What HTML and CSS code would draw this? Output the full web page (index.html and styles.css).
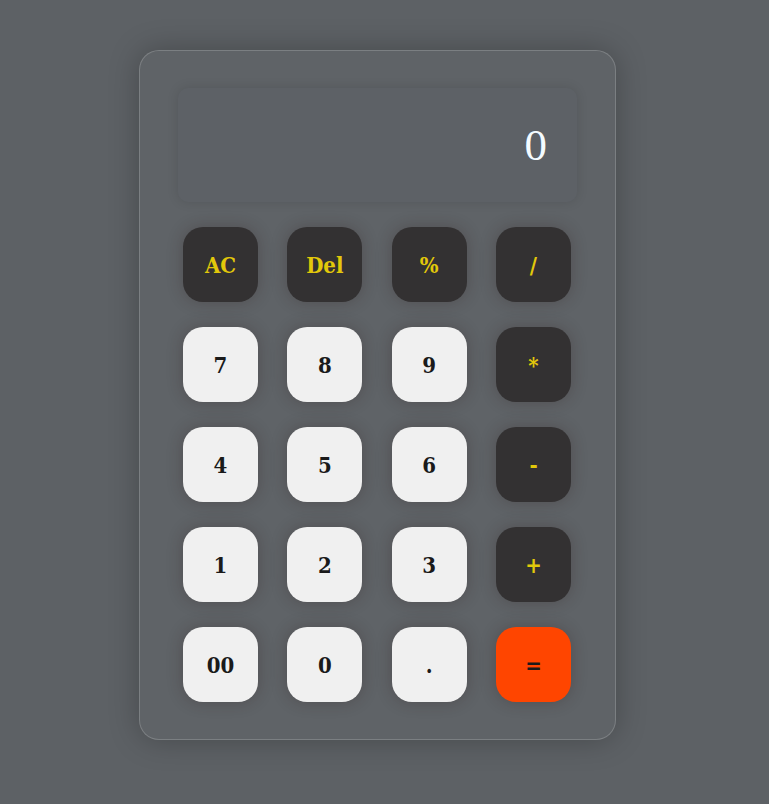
FILE: index.html
```html
<!DOCTYPE html>
<html>
<head>
<meta charset="utf-8">
<link rel="stylesheet" href="styles.css">
</head>
<body>
<div class="calc">
  <div class="display"><span class="value">0</span></div>
  <div class="keys">
    <button class="key op">AC</button>
    <button class="key op">Del</button>
    <button class="key op">%</button>
    <button class="key op">/</button>
    <button class="key">7</button>
    <button class="key">8</button>
    <button class="key">9</button>
    <button class="key op">*</button>
    <button class="key">4</button>
    <button class="key">5</button>
    <button class="key">6</button>
    <button class="key op">-</button>
    <button class="key">1</button>
    <button class="key">2</button>
    <button class="key">3</button>
    <button class="key op">+</button>
    <button class="key">00</button>
    <button class="key">0</button>
    <button class="key">.</button>
    <button class="key eq">=</button>
  </div>
</div>
</body>
</html>
```
FILE: styles.css
```css
html, body {
  margin: 0;
  padding: 0;
  background: #5d6165;
  height: 100%;
}
body {
  padding-top: 50px;
  box-sizing: border-box;
}
.calc {
  margin-left: 139px;
  width: 477px;
  box-sizing: border-box;
  padding: 37px 38px;
  border: 1px solid rgba(255, 255, 255, 0.18);
  border-radius: 20px;
  background: #5f6367;
  box-shadow: 0 0 30px rgba(0, 0, 0, 0.25);
}
.display {
  height: 114px;
  border-radius: 10px;
  background: #5d6166;
  box-shadow: 0 0 12px rgba(0, 0, 0, 0.12);
  display: flex;
  align-items: center;
  justify-content: flex-end;
  padding-right: 30px;
  box-sizing: border-box;
}
.value {
  font-family: "Liberation Serif", serif;
  font-size: 45px;
  color: #f4fbff;
}
.keys {
  margin-top: 25px;
  padding: 0 6px 0 5px;
  display: grid;
  grid-template-columns: repeat(4, 75px);
  justify-content: space-between;
  row-gap: 25px;
}
.key {
  width: 75px;
  height: 75px;
  border: none;
  border-radius: 20px;
  background: #f0f0f0;
  color: #1a1a1a;
  font-family: "DejaVu Serif Condensed", "DejaVu Serif", serif;
  font-stretch: condensed;
  font-weight: bold;
  font-size: 22px;
  padding: 0;
  box-shadow: 0 0 16px rgba(45, 30, 30, 0.3);
  display: flex;
  align-items: center;
  justify-content: center;
}
.key.op {
  background: #333132;
  color: #e2c80a;
}
.key.eq {
  background: #ff4500;
  color: #1a1a1a;
}
```
